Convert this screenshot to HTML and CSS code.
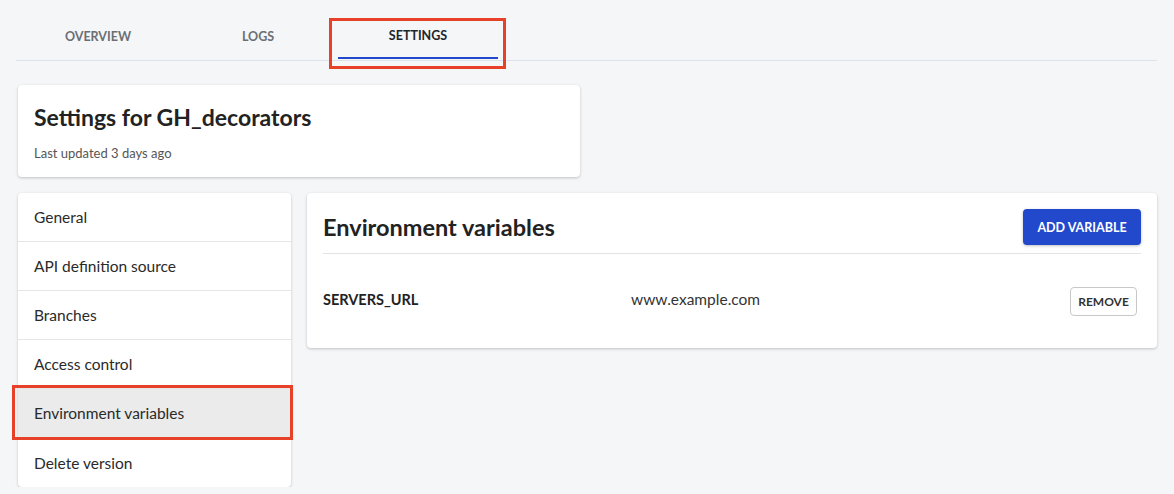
FILE: index.html
```html
<!DOCTYPE html>
<html>
<head>
<meta charset="utf-8">
<link rel="stylesheet" href="styles.css">
</head>
<body>
<div class="page">
  <nav class="tabs">
    <div class="tab">OVERVIEW</div>
    <div class="tab">LOGS</div>
    <div class="tab tab-active">SETTINGS<span class="mark mark-tab"></span></div>
  </nav>
  <section class="card header-card">
    <h1 class="title">Settings for GH_decorators</h1>
    <p class="subtitle">Last updated 3 days ago</p>
  </section>
  <div class="content">
    <ul class="card side">
      <li class="side-item">General</li>
      <li class="side-item">API definition source</li>
      <li class="side-item">Branches</li>
      <li class="side-item">Access control</li>
      <li class="side-item side-active">Environment variables<span class="mark mark-side"></span></li>
      <li class="side-item">Delete version</li>
    </ul>
    <section class="card main">
      <div class="main-head">
        <h2 class="main-title">Environment variables</h2>
        <button class="btn-primary">ADD VARIABLE</button>
      </div>
      <div class="var-row">
        <span class="var-name">SERVERS_URL</span>
        <span class="var-value">www.example.com</span>
        <button class="btn-outline">REMOVE</button>
      </div>
    </section>
  </div>
</div>
</body>
</html>
```
FILE: styles.css
```css
* { box-sizing: border-box; }
html, body { margin: 0; padding: 0; }
body {
  background: #f4f6f8;
  font-family: "Source Sans Pro", "Lato", "Noto Sans", sans-serif;
  color: #212529;
}
.page { padding: 0 17px 0 18px; }
.tabs {
  display: flex;
  height: 61px;
  border-bottom: 1px solid #dde3ec;
  margin-left: -2px;
  padding-left: 2px;
}
.tab {
  position: relative;
  width: 160px;
  display: flex;
  align-items: center;
  justify-content: center;
  padding-top: 13px;
  height: 59px;
  font-size: 12.5px;
  font-weight: 700;
  color: #6b6e73;
}
.tab-active {
  color: #212529;
  border-bottom: 2px solid #2249cc;
}
.mark {
  position: absolute;
  border: 3px solid #e8412a;
  pointer-events: none;
}
.mark-tab { left: -9px; right: -8px; top: 18px; bottom: -12px; }
.mark-side { left: -6px; right: -2px; top: -4px; bottom: -3px; }
.card {
  background: #fff;
  border-radius: 4px;
  box-shadow: 0 1px 3px rgba(0, 0, 0, 0.22);
}
.header-card {
  margin-top: 24px;
  width: 562px;
  height: 92px;
  padding: 17px 16px 0;
}
.title {
  margin: 0;
  font-size: 23px;
  font-weight: 700;
  line-height: 30px;
  color: #222;
}
.subtitle {
  margin: 13px 0 0;
  font-size: 13px;
  color: #555;
  line-height: 16px;
}
.content {
  display: flex;
  align-items: flex-start;
  gap: 16px;
  margin-top: 16px;
}
.side {
  list-style: none;
  margin: 0;
  padding: 0;
  width: 273px;
  flex: none;
}
.side-item {
  position: relative;
  height: 49px;
  display: flex;
  align-items: center;
  padding-left: 16px;
  font-size: 15.5px;
  color: #2a2a2a;
  border-bottom: 1px solid #e6e6e6;
}
.side-item:last-child { border-bottom: none; }
.side-active { background: #ebebeb; }
.main {
  flex: 1;
  padding: 16px 16px 0;
  height: 155px;
}
.main-head {
  display: flex;
  justify-content: space-between;
  align-items: center;
  height: 45px;
  border-bottom: 1px solid #e3e3e3;
  padding-bottom: 8px;
}
.main-title {
  margin: 0;
  font-size: 23.5px;
  font-weight: 700;
  color: #222;
}
.btn-primary {
  font-family: inherit;
  background: #2249cc;
  color: #fff;
  border: none;
  border-radius: 4px;
  width: 118px;
  height: 36px;
  font-size: 12.5px;
  font-weight: 700;
  box-shadow: 0 1px 3px rgba(0, 0, 0, 0.25);
}
.var-row {
  display: flex;
  align-items: center;
  height: 90px;
  padding-right: 4px;
}
.var-name {
  width: 308px;
  font-size: 14.5px;
  font-weight: 700;
  color: #222;
}
.var-value {
  flex: 1;
  font-size: 15.5px;
  color: #333;
}
.btn-outline {
  font-family: inherit;
  background: #fff;
  border: 1px solid #c8c8c8;
  border-radius: 4px;
  width: 67px;
  height: 29px;
  font-size: 12px;
  font-weight: 700;
  color: #333;
  margin-top: 4px;
}
```
